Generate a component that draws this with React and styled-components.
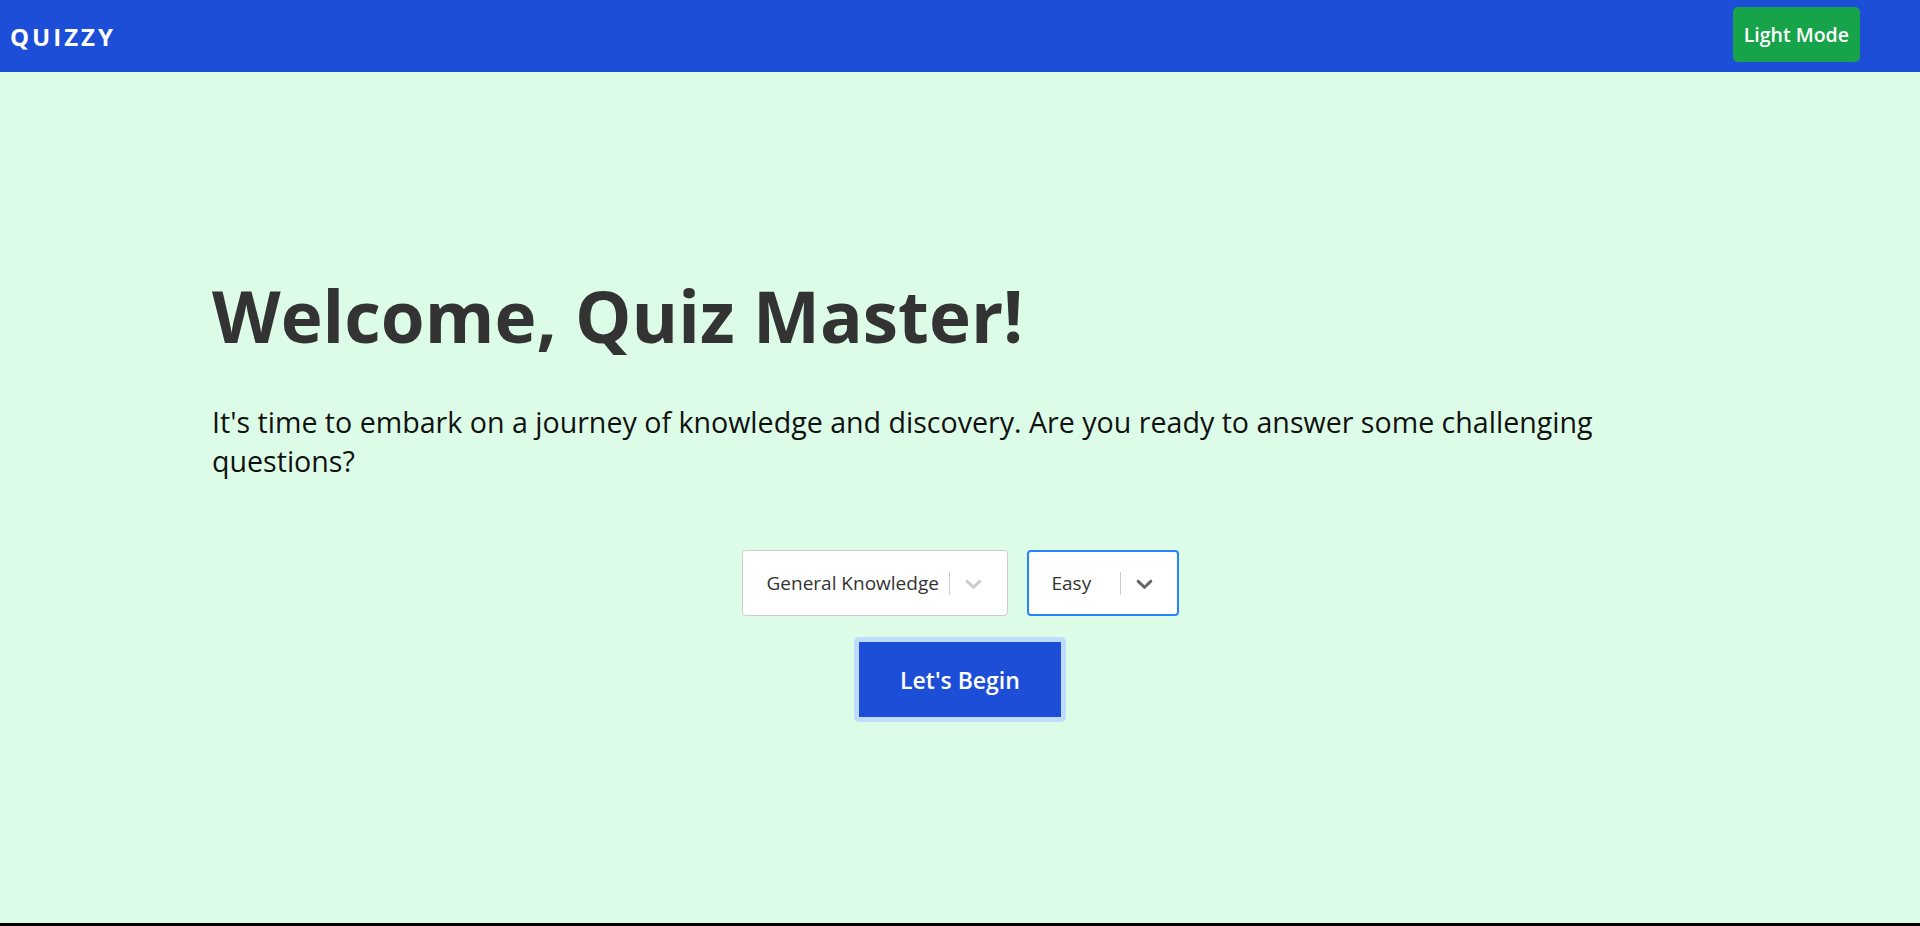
import React from 'react';
import styled, { createGlobalStyle } from 'styled-components';

const GlobalStyle = createGlobalStyle`
  html {
    background: #000;
  }
  body {
    margin: 0;
    font-family: "Open Sans", "Noto Sans", sans-serif;
  }
`;

const Page = styled.div`
  min-height: calc(100vh - 3px);
  background: #dcfce7;
  display: flex;
  flex-direction: column;
`;

const NavBar = styled.header`
  height: 72px;
  background: #1d4ed8;
  display: flex;
  align-items: center;
  justify-content: space-between;
  padding: 0 60px 0 10px;
`;

const Logo = styled.div`
  color: #fff;
  font-size: 24px;
  font-weight: 700;
  letter-spacing: 3px;
`;

const ModeButton = styled.button`
  height: 55px;
  padding: 0 11px;
  margin-top: -3px;
  border: none;
  border-radius: 5px;
  background: #16a34a;
  color: #fff;
  font-family: inherit;
  font-size: 19.5px;
  font-weight: 600;
`;

const Main = styled.main`
  width: 1496px;
  margin: 0 auto;
  padding-top: 200px;
`;

const Title = styled.h1`
  margin: 0;
  font-size: 71px;
  line-height: 88px;
  font-weight: 700;
  color: #333;
`;

const Intro = styled.p`
  max-width: 1420px;
  margin: 42px 0 0;
  font-size: 28.6px;
  line-height: 39px;
  color: #111;
`;

const Controls = styled.div`
  margin-top: 70px;
  display: flex;
  flex-direction: column;
  align-items: center;
  gap: 21px;
`;

const SelectRow = styled.div`
  display: flex;
  gap: 19px;
`;

const SelectBox = styled.div`
  width: ${p => p.$width}px;
  height: 66px;
  box-sizing: border-box;
  background: #fff;
  border: ${p => (p.$focused ? '2px solid #2684ff' : '1px solid #ccc')};
  border-radius: 4px;
  display: flex;
  align-items: center;
  padding-left: ${p => (p.$focused ? 23 : 24)}px;
`;

const SelectValue = styled.span`
  flex: 1;
  font-size: 19px;
  color: #333;
  white-space: nowrap;
`;

const Separator = styled.span`
  width: 1px;
  height: 23px;
  background: #ccc;
`;

const Indicator = styled.span`
  display: flex;
  padding: 0 ${p => (p.$focused ? 19 : 20)}px 0 10px;
  color: ${p => (p.$focused ? '#666' : '#ccc')};
`;

const StartButton = styled.button`
  width: 212px;
  height: 85px;
  border: 5px solid #bfdbfe;
  border-radius: 5px;
  background: #1d4ed8;
  color: #fff;
  font-family: inherit;
  font-size: 23px;
  font-weight: 600;
`;

const Chevron = () => (
  <svg width="27" height="27" viewBox="0 0 20 20" fill="currentColor" aria-hidden="true">
    <path d="M4.516 7.548c0.436-0.446 1.043-0.481 1.576 0l3.908 3.747 3.908-3.747c0.533-0.481 1.141-0.446 1.574 0 0.436 0.445 0.408 1.197 0 1.615-0.406 0.418-4.695 4.502-4.695 4.502-0.217 0.223-0.502 0.335-0.787 0.335s-0.57-0.112-0.789-0.335c0 0-4.287-4.084-4.695-4.502s-0.436-1.17 0-1.615z" />
  </svg>
);

const Select = ({ value, width, focused }) => (
  <SelectBox $width={width} $focused={focused}>
    <SelectValue>{value}</SelectValue>
    <Separator />
    <Indicator $focused={focused}>
      <Chevron />
    </Indicator>
  </SelectBox>
);

export default function App() {
  return (
    <>
      <GlobalStyle />
      <Page>
        <NavBar>
          <Logo>QUIZZY</Logo>
          <ModeButton>Light Mode</ModeButton>
        </NavBar>
        <Main>
          <Title>Welcome, Quiz Master!</Title>
          <Intro>
            It's time to embark on a journey of knowledge and discovery. Are you ready to answer some challenging questions?
          </Intro>
          <Controls>
            <SelectRow>
              <Select value="General Knowledge" width={266} />
              <Select value="Easy" width={152} focused />
            </SelectRow>
            <StartButton>Let's Begin</StartButton>
          </Controls>
        </Main>
      </Page>
    </>
  );
}
